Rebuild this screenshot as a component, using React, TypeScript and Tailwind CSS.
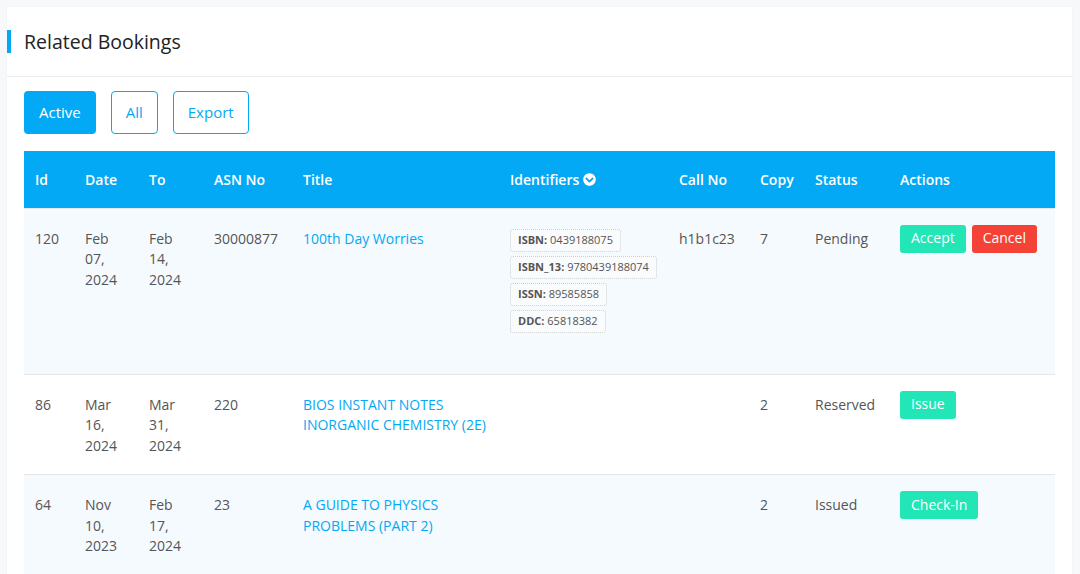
import { FaChevronCircleDown } from "react-icons/fa";

type Booking = {
  id: number;
  date: string[];
  to: string[];
  asn: string;
  title: string[];
  identifiers: { label: string; value: string }[];
  callNo: string;
  copy: number;
  status: string;
  actions: { label: string; tone: "green" | "red" }[];
};

const bookings: Booking[] = [
  {
    id: 120,
    date: ["Feb", "07,", "2024"],
    to: ["Feb", "14,", "2024"],
    asn: "30000877",
    title: ["100th Day Worries"],
    identifiers: [
      { label: "ISBN", value: "0439188075" },
      { label: "ISBN_13", value: "9780439188074" },
      { label: "ISSN", value: "89585858" },
      { label: "DDC", value: "65818382" },
    ],
    callNo: "h1b1c23",
    copy: 7,
    status: "Pending",
    actions: [
      { label: "Accept", tone: "green" },
      { label: "Cancel", tone: "red" },
    ],
  },
  {
    id: 86,
    date: ["Mar", "16,", "2024"],
    to: ["Mar", "31,", "2024"],
    asn: "220",
    title: ["BIOS INSTANT NOTES", "INORGANIC CHEMISTRY (2E)"],
    identifiers: [],
    callNo: "",
    copy: 2,
    status: "Reserved",
    actions: [{ label: "Issue", tone: "green" }],
  },
  {
    id: 64,
    date: ["Nov", "10,", "2023"],
    to: ["Feb", "17,", "2024"],
    asn: "23",
    title: ["A GUIDE TO PHYSICS", "PROBLEMS (PART 2)"],
    identifiers: [],
    callNo: "",
    copy: 2,
    status: "Issued",
    actions: [{ label: "Check-In", tone: "green" }],
  },
];

const columns = [
  { name: "Id", w: "w-[50px]" },
  { name: "Date", w: "w-[64px]" },
  { name: "To", w: "w-[65px]" },
  { name: "ASN No", w: "w-[89px]" },
  { name: "Title", w: "w-[207px]" },
  { name: "Identifiers", w: "w-[169px]" },
  { name: "Call No", w: "w-[81px]" },
  { name: "Copy", w: "w-[55px]" },
  { name: "Status", w: "w-[85px]" },
  { name: "Actions", w: "w-[166px]" },
];

function Lines({ lines }: { lines: string[] }) {
  return (
    <>
      {lines.map((l, i) => (
        <div key={i}>{l}</div>
      ))}
    </>
  );
}

export default function App() {
  return (
    <div className="min-h-[574px] bg-[#f7f8f9] pt-[7px] pl-[7px] pr-[8px] font-['Open_Sans',sans-serif] text-[14px] text-[#555]">
      <div className="bg-white shadow-[0_0_2px_rgba(0,0,0,0.04)]">
        <div className="flex items-center h-[70px] border-b border-[#ececec]">
          <span className="w-[4px] h-[23px] bg-[#03a9f4]" />
          <h2 className="ml-[13px] text-[19.5px] text-[#222] leading-none">Related Bookings</h2>
        </div>

        <div className="px-[17px]">
          <div className="flex gap-[15px] pt-[14px] pb-[17px]">
            <button className="h-[43px] px-[15px] rounded-[4px] bg-[#03a9f4] text-white text-[15px]">Active</button>
            <button className="h-[43px] px-[14px] rounded-[4px] border border-[#03a9f4] text-[#03a9f4] text-[15px]">All</button>
            <button className="h-[43px] px-[14px] rounded-[4px] border border-[#03a9f4] text-[#03a9f4] text-[15px]">Export</button>
          </div>

          <table className="w-full table-fixed border-collapse">
            <thead>
              <tr className="bg-[#03a9f4] text-white h-[57px]">
                {columns.map((c) => (
                  <th key={c.name} className={`${c.w} pl-[11px] text-left font-semibold text-[14px]`}>
                    <span className="inline-flex items-center gap-[4px]">
                      {c.name}
                      {c.name === "Identifiers" && <FaChevronCircleDown className="text-[13px]" />}
                    </span>
                  </th>
                ))}
              </tr>
            </thead>
            <tbody>
              {bookings.map((b, idx) => (
                <tr
                  key={b.id}
                  className={`align-top leading-[20.5px] border-t border-[#e6e6e6] ${idx % 2 === 0 ? "bg-[#f5fafe]" : "bg-white"}`}
                >
                  <td className="pl-[11px] pt-[20px] pb-[18px]">{b.id}</td>
                  <td className="pl-[11px] pt-[20px] pb-[18px]">
                    <Lines lines={b.date} />
                  </td>
                  <td className="pl-[11px] pt-[20px] pb-[18px]">
                    <Lines lines={b.to} />
                  </td>
                  <td className="pl-[11px] pt-[20px] pb-[18px]">{b.asn}</td>
                  <td className="pl-[11px] pt-[20px] pb-[18px] text-[#03a9f4]">
                    <Lines lines={b.title} />
                  </td>
                  <td className="pl-[11px] pt-[20px] pb-[41px]">
                    <div className="flex flex-col items-start gap-[4px]">
                      {b.identifiers.map((it) => (
                        <span
                          key={it.label}
                          className="border border-dotted border-[#cfcfcf] rounded-[3px] bg-[#f9fbfc] px-[7px] h-[23px] flex items-center text-[11px] text-[#555]"
                        >
                          <b className="font-bold">{it.label}:</b>&nbsp;{it.value}
                        </span>
                      ))}
                    </div>
                  </td>
                  <td className="pl-[11px] pt-[20px] pb-[18px]">{b.callNo}</td>
                  <td className="pl-[11px] pt-[20px] pb-[18px]">{b.copy}</td>
                  <td className="pl-[11px] pt-[20px] pb-[18px]">{b.status}</td>
                  <td className="pl-[11px] pt-[16px] pb-[18px]">
                    <div className="flex gap-[6px]">
                      {b.actions.map((a) => (
                        <button
                          key={a.label}
                          className={`h-[28px] px-[11px] rounded-[3px] text-white text-[14px] ${
                            a.tone === "green" ? "bg-[#22e6b6]" : "bg-[#f44336]"
                          }`}
                        >
                          {a.label}
                        </button>
                      ))}
                    </div>
                  </td>
                </tr>
              ))}
            </tbody>
          </table>
        </div>
      </div>
    </div>
  );
}
